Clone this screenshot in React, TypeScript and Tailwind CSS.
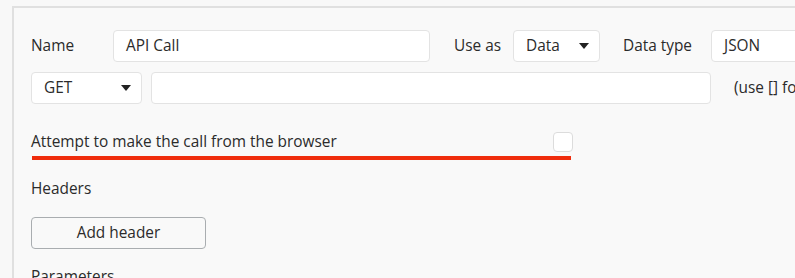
const font = { fontFamily: '"Open Sans", "Noto Sans", sans-serif' };

function Caret() {
  return (
    <svg width="10" height="6" viewBox="0 0 10 6" className="shrink-0">
      <path d="M0 0 H10 L5 6 Z" fill="#222" />
    </svg>
  );
}

function Field({ value, className }: { value?: string; className: string }) {
  return (
    <div
      className={`flex h-8 items-center rounded border border-[#e3e3e3] bg-white px-3 ${className}`}
    >
      {value}
    </div>
  );
}

function Select({ value, className }: { value: string; className: string }) {
  return (
    <div
      className={`flex h-8 items-center justify-between rounded border border-[#e3e3e3] bg-white pl-3 pr-[10px] ${className}`}
    >
      <span>{value}</span>
      <Caret />
    </div>
  );
}

export default function App() {
  return (
    <div
      className="h-[278px] w-[795px] overflow-hidden bg-[#f8f8f8] pl-3 pt-1.5 text-[15.4px] leading-[22px] text-[#2b2b2b]"
      style={font}
    >
      <div className="h-full border-l-2 border-t-2 border-[#e0e0e0] bg-[#f9f9f9] pl-[17px] pt-[22px]">
        <div className="flex w-[900px] items-center">
          <span className="w-[82px]">Name</span>
          <Field value="API Call" className="w-[317px]" />
          <span className="ml-6 w-[59px]">Use as</span>
          <Select value="Data" className="w-[87px]" />
          <span className="ml-[23px] w-[88px]">Data type</span>
          <Field value="JSON" className="w-[150px]" />
        </div>
        <div className="mt-2.5 flex w-[900px] items-center">
          <Select value="GET" className="w-[111px]" />
          <Field className="ml-[9px] w-[560px]" />
          <span className="ml-[23px] whitespace-nowrap">(use [] for</span>
        </div>
        <div className="mt-[27px] w-[542px]">
          <div className="flex items-center justify-between">
            <span>Attempt to make the call from the browser</span>
            <div className="h-5 w-5 rounded border border-[#dcdcdc] bg-white" />
          </div>
          <div className="ml-px mt-[3px] h-1 w-[539px] bg-[#ef2c0c]" />
        </div>
        <div className="mt-[18px]">Headers</div>
        <button className="mt-[17px] flex h-8 w-[175px] items-center justify-center rounded border border-[#a9adb0] bg-[#f9f9f9]">
          Add header
        </button>
        <div className="mt-[17px]">Parameters</div>
      </div>
    </div>
  );
}
